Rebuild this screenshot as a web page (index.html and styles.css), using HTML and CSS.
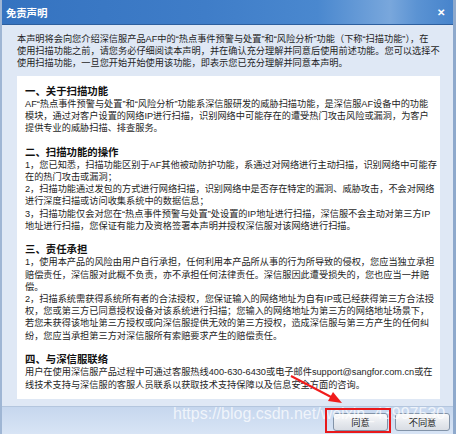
FILE: index.html
```html
<!DOCTYPE html>
<html lang="zh-CN">
<head>
<meta charset="utf-8">
<title>免责声明</title>
<link rel="stylesheet" href="styles.css">
</head>
<body>
<div class="window">
  <div class="titlebar">
    <span class="title">免责声明</span>
    <span class="close">✕</span>
  </div>
  <div class="content">
    <p class="intro">本声明将会向您介绍深信服产品AF中的“热点事件预警与处置”和“风险分析”功能（下称“扫描功能”），在<br>使用扫描功能之前，请您务必仔细阅读本声明，并在确认充分理解并同意后使用前述功能。您可以选择不<br>使用扫描功能，一旦您开始开始使用该功能，即表示您已充分理解并同意本声明。</p>
    <div class="card">
      <h2 class="heading">一、关于扫描功能</h2>
      <p class="para">AF“热点事件预警与处置”和“风险分析”功能系深信服研发的威胁扫描功能，是深信服AF设备中的功能<br>模块，通过对客户设置的网络IP进行扫描，识别网络中可能存在的遭受热门攻击风险或漏洞，为客户<br>提供专业的威胁扫描、排查服务。</p>
      <h2 class="heading">二、扫描功能的操作</h2>
      <p class="para">1，您已知悉，扫描功能区别于AF其他被动防护功能，系通过对网络进行主动扫描，识别网络中可能存<br>在的热门攻击或漏洞；<br>2，扫描功能通过发包的方式进行网络扫描，识别网络中是否存在特定的漏洞、威胁攻击，不会对网络<br>进行深度扫描或访问收集系统中的数据信息；<br>3，扫描功能仅会对您在“热点事件预警与处置”处设置的IP地址进行扫描，深信服不会主动对第三方IP<br>地址进行扫描，您保证有能力及资格签署本声明并授权深信服对该网络进行扫描。</p>
      <h2 class="heading">三、责任承担</h2>
      <p class="para">1，使用本产品的风险由用户自行承担，任何利用本产品所从事的行为所导致的侵权，您应当独立承担<br>赔偿责任，深信服对此概不负责，亦不承担任何法律责任。深信服因此遭受损失的，您也应当一并赔<br>偿。<br>2，扫描系统需获得系统所有者的合法授权，您保证输入的网络地址为自有IP或已经获得第三方合法授<br>权，您或第三方已同意授权设备对该系统进行扫描；您输入的网络地址为第三方的网络地址场景下，<br>若您未获得该地址第三方授权或向深信服提供无效的第三方授权，造成深信服与第三方产生的任何纠<br>纷，您应当承担第三方对深信服所有索赔要求产生的赔偿责任。</p>
      <h2 class="heading">四、与深信服联络</h2>
      <p class="para">用户在使用深信服产品过程中可通过客服热线400-630-6430或电子邮件support@sangfor.com.cn或在<br>线技术支持与深信服的客服人员联系以获取技术支持保障以及信息安全方面的咨询。</p>
    </div>
  </div>
  <div class="footer">
    <button class="btn">同意</button>
    <button class="btn">不同意</button>
  </div>
  <div class="watermark">https://blog.csdn.net/weixin_43997530</div>
  <div class="highlight"></div>
  <svg class="arrow" width="456" height="434" viewBox="0 0 456 434">
    <line x1="291" y1="376" x2="333" y2="398" stroke="#f01c1c" stroke-width="2"/>
    <polygon points="342,403 328,401 333,392" fill="#f01c1c"/>
  </svg>
</div>
</body>
</html>
```
FILE: styles.css
```css
html, body {
  margin: 0;
  padding: 0;
}
body {
  width: 456px;
  height: 434px;
  overflow: hidden;
  font-family: "Liberation Sans", "Noto Sans CJK SC", sans-serif;
  color: #1e1e1e;
}
.window {
  position: relative;
  width: 456px;
  height: 434px;
  display: flex;
  flex-direction: column;
  background: #dfe8f5;
  box-sizing: border-box;
  border-left: 2px solid #9fb6d4;
  border-right: 3px solid #8ea9cc;
  overflow: hidden;
}
.titlebar {
  height: 24px;
  flex: none;
  display: flex;
  align-items: center;
  justify-content: space-between;
  padding: 0 8px 0 4px;
  background: linear-gradient(to right, #3573c0 0%, #3f7dc8 45%, #4a88cf 70%, #79a7dc 86%, #5b93d3 92%, #4784cc 100%);
  border-bottom: 1px solid #2d5f9e;
  color: #fff;
}
.title {
  font-size: 10.5px;
  font-weight: bold;
  letter-spacing: -0.2px;
}
.close {
  font-size: 10px;
  font-weight: bold;
}
.content {
  flex: 1;
  padding: 8px 14px 0 15px;
  font-size: 9.2px;
  line-height: 12.2px;
}
.intro {
  margin: 0;
  white-space: nowrap;
}
.card {
  margin-top: 6.5px;
  background: #fff;
  padding: 8.5px 8px 8.5px 8px;
  width: 423px;
  box-sizing: border-box;
}
.heading {
  margin: 11.5px 0 0 0;
  font-size: 10.4px;
  line-height: 13px;
  font-weight: bold;
  color: #111;
}
.heading:first-child {
  margin-top: 0;
}
.para {
  margin: 0;
  white-space: nowrap;
}
.footer {
  flex: none;
  height: 28px;
  box-sizing: border-box;
  display: flex;
  justify-content: flex-end;
  align-items: flex-start;
  gap: 7px;
  padding: 6px 3px 0 0;
  border-top: 1px solid #b4c6de;
  background: linear-gradient(#c6d7ee, #d8e4f5);
}
.btn {
  width: 55px;
  height: 18px;
  padding: 0;
  font-family: "Liberation Sans", "Noto Sans CJK SC", sans-serif;
  font-size: 9.2px;
  color: #1e1e1e;
  border: 1px solid #8293a8;
  border-radius: 3px;
  background: linear-gradient(#fbfbfb, #e6e9ee 55%, #d9dde4);
}
.watermark {
  position: absolute;
  left: 171px;
  top: 405px;
  font-family: "Liberation Sans", sans-serif;
  font-size: 16px;
  color: rgba(255, 255, 255, 0.72);
  white-space: nowrap;
  pointer-events: none;
}
.highlight {
  position: absolute;
  left: 323px;
  top: 408px;
  width: 66px;
  height: 25px;
  box-sizing: border-box;
  border: 2px solid #e8191b;
  pointer-events: none;
}
.arrow {
  position: absolute;
  left: -2px;
  top: 0;
  pointer-events: none;
}
```
